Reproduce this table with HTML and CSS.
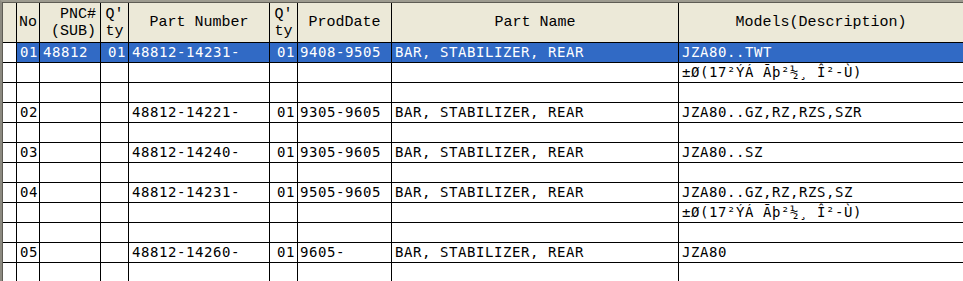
FILE: index.html
```html
<!DOCTYPE html>
<html>
<head>
<meta charset="utf-8">
<link rel="stylesheet" href="styles.css">
</head>
<body>
<div class="frame">
<div class="inner">
<table class="grid">
<colgroup>
<col class="c0"><col class="c1"><col class="c2"><col class="c3"><col class="c4"><col class="c5"><col class="c6"><col class="c7"><col class="c8">
</colgroup>
<thead>
<tr>
<th></th>
<th>No</th>
<th class="pnc">PNC#<br>(SUB)</th>
<th>Q'<br>ty</th>
<th>Part Number</th>
<th>Q'<br>ty</th>
<th>ProdDate</th>
<th>Part Name</th>
<th class="last">Models(Description)</th>
</tr>
</thead>
<tbody>
<tr class="sel"><td class="g"></td><td>01</td><td>48812</td><td class="q">01</td><td>48812-14231-</td><td class="q">01</td><td class="d">9408-9505</td><td>BAR, STABILIZER, REAR</td><td class="last">JZA80..TWT</td></tr>
<tr><td class="g"></td><td></td><td></td><td class="q"></td><td></td><td class="q"></td><td class="d"></td><td></td><td class="last">±Ø(17²ÝÁ Ãþ²½¸ Î²-Ù)</td></tr>
<tr><td class="g"></td><td></td><td></td><td class="q"></td><td></td><td class="q"></td><td class="d"></td><td></td><td class="last"></td></tr>
<tr><td class="g"></td><td>02</td><td></td><td class="q"></td><td>48812-14221-</td><td class="q">01</td><td class="d">9305-9605</td><td>BAR, STABILIZER, REAR</td><td class="last">JZA80..GZ,RZ,RZS,SZR</td></tr>
<tr><td class="g"></td><td></td><td></td><td class="q"></td><td></td><td class="q"></td><td class="d"></td><td></td><td class="last"></td></tr>
<tr><td class="g"></td><td>03</td><td></td><td class="q"></td><td>48812-14240-</td><td class="q">01</td><td class="d">9305-9605</td><td>BAR, STABILIZER, REAR</td><td class="last">JZA80..SZ</td></tr>
<tr><td class="g"></td><td></td><td></td><td class="q"></td><td></td><td class="q"></td><td class="d"></td><td></td><td class="last"></td></tr>
<tr><td class="g"></td><td>04</td><td></td><td class="q"></td><td>48812-14231-</td><td class="q">01</td><td class="d">9505-9605</td><td>BAR, STABILIZER, REAR</td><td class="last">JZA80..GZ,RZ,RZS,SZ</td></tr>
<tr><td class="g"></td><td></td><td></td><td class="q"></td><td></td><td class="q"></td><td class="d"></td><td></td><td class="last">±Ø(17²ÝÁ Ãþ²½¸ Î²-Ù)</td></tr>
<tr><td class="g"></td><td></td><td></td><td class="q"></td><td></td><td class="q"></td><td class="d"></td><td></td><td class="last"></td></tr>
<tr><td class="g"></td><td>05</td><td></td><td class="q"></td><td>48812-14260-</td><td class="q">01</td><td class="d">9605-</td><td>BAR, STABILIZER, REAR</td><td class="last">JZA80</td></tr>
<tr><td class="g"></td><td></td><td></td><td class="q"></td><td></td><td class="q"></td><td class="d"></td><td></td><td class="last"></td></tr>
</tbody>
</table>
</div>
</div>
</body>
</html>
```
FILE: styles.css
```css
html, body {
  margin: 0;
  padding: 0;
  background: #ffffff;
  overflow: hidden;
}
.frame {
  width: 963px;
  height: 281px;
  box-sizing: border-box;
  border-left: 2px solid #8c8a80;
  border-top: 2px solid #9d9b90;
  overflow: hidden;
  background: #ffffff;
}
.inner {
  border-left: 1px solid #5e5c54;
  border-top: 1px solid #5e5c54;
}
.grid {
  border-collapse: separate;
  border-spacing: 0;
  table-layout: fixed;
  width: 960px;
}
.c0 { width: 14px; }
.c1 { width: 23px; }
.c2 { width: 61px; }
.c3 { width: 28px; }
.c4 { width: 141px; }
.c5 { width: 28px; }
.c6 { width: 94px; }
.c7 { width: 287px; }
.c8 { width: 284px; }
.grid th, .grid td {
  box-sizing: border-box;
  padding: 0;
  border-right: 1px solid #000;
  border-bottom: 1px solid #000;
  white-space: nowrap;
  overflow: hidden;
}
.grid th.last, .grid td.last {
  border-right: none;
}
.grid th {
  height: 40px;
  background: #ece9d8;
  font-family: "Liberation Mono", "DejaVu Sans Mono", monospace;
  font-size: 15px;
  font-weight: normal;
  line-height: 17px;
  color: #000;
  text-align: center;
  vertical-align: middle;
}
.grid th.pnc {
  text-align: right;
  padding-right: 4px;
}
.grid td {
  height: 20px;
  font-family: "DejaVu Sans Mono", monospace;
  font-size: 14px;
  letter-spacing: 0.57px;
  line-height: 19px;
  color: #000;
  padding-left: 3px;
  vertical-align: middle;
  background: #fff;
}
.grid td.q {
  text-align: right;
  padding-left: 0;
  padding-right: 2px;
}
.grid td.d {
  padding-left: 2px;
}
.grid tr.sel td {
  background: #316ac5;
  color: #fff;
}
.grid tr.sel td.g {
  background: #fff;
}
```
